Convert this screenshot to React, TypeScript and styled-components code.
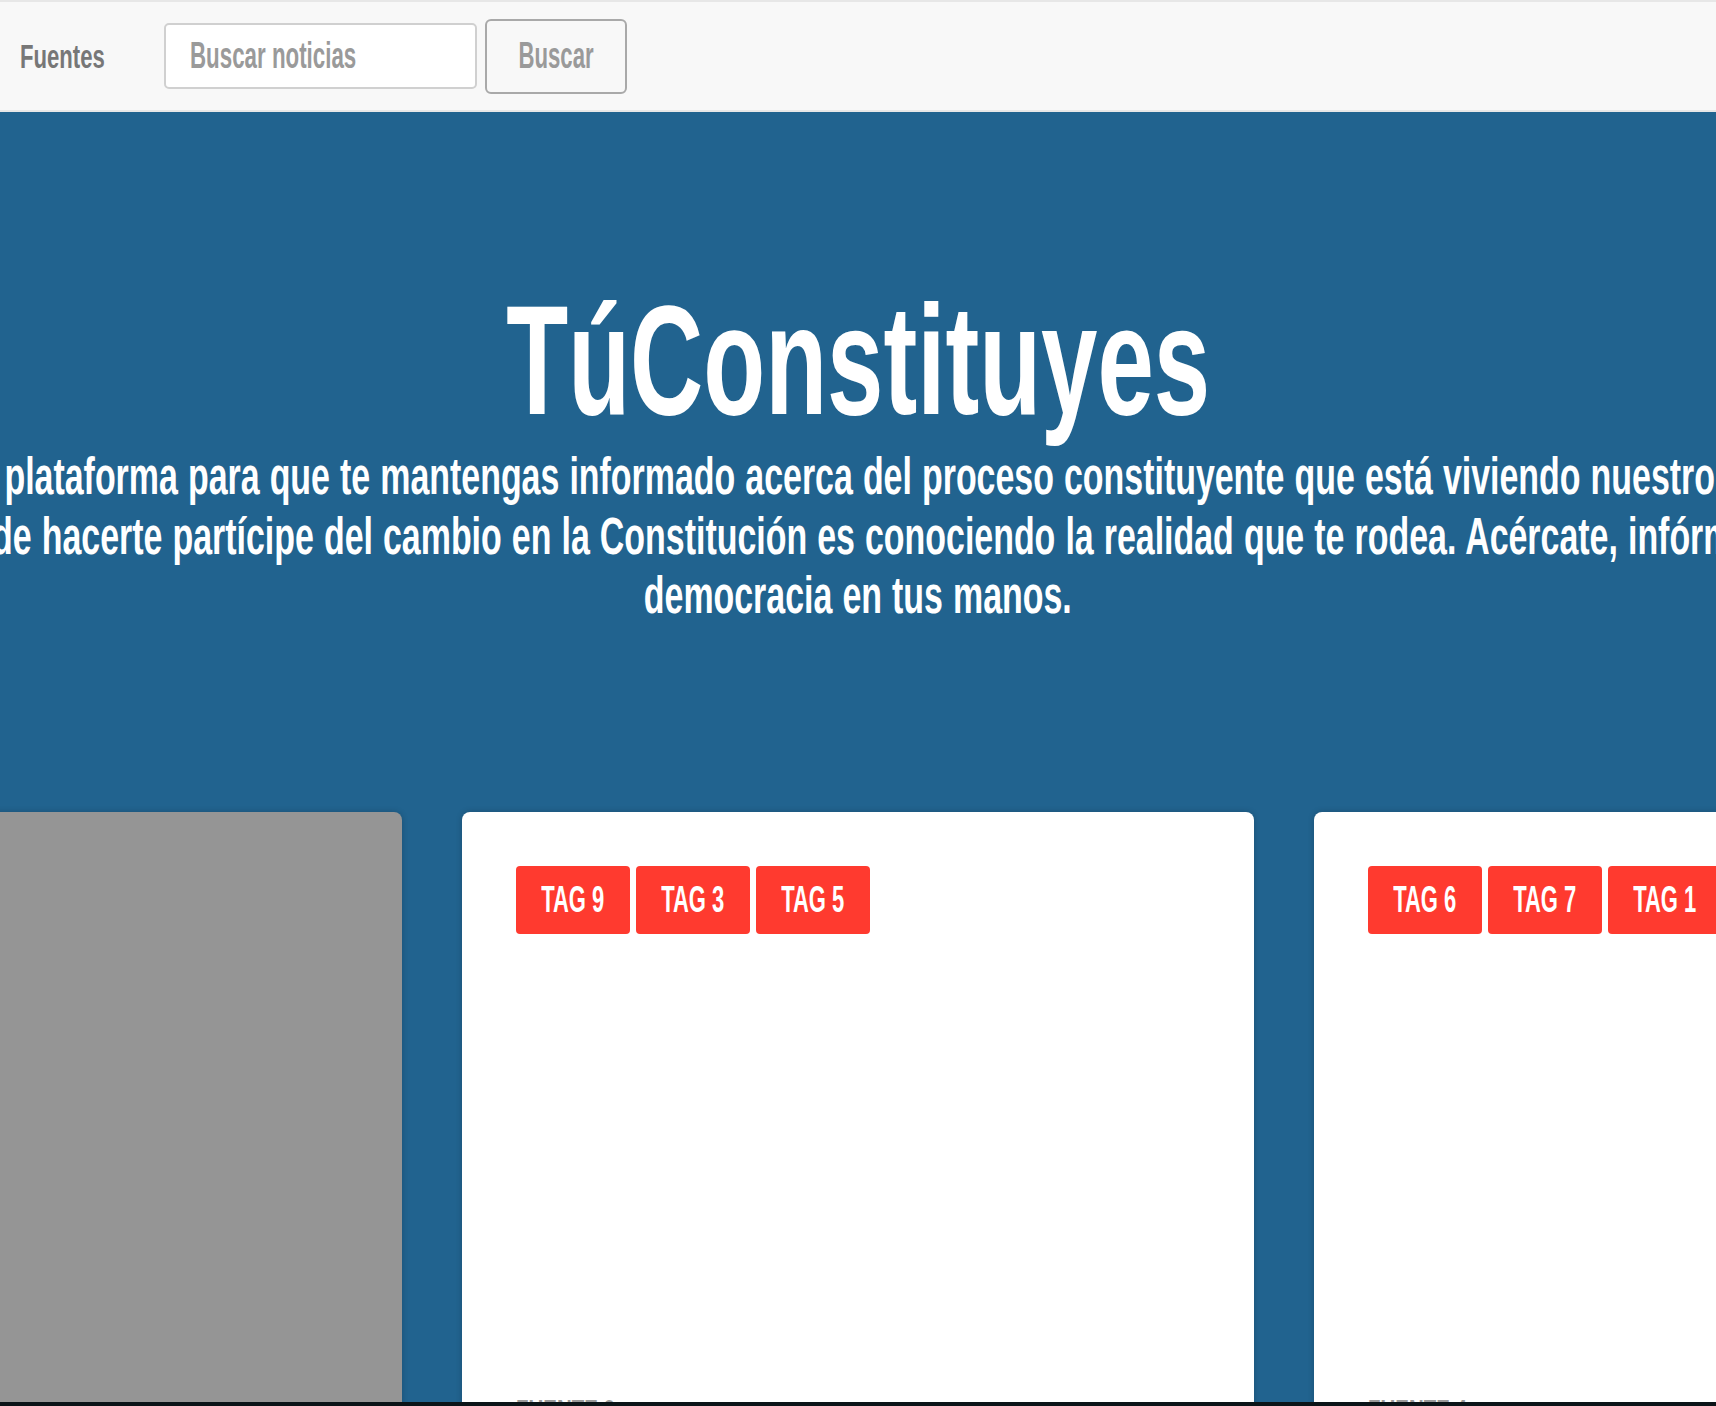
import React from "react";
import styled, { createGlobalStyle } from "styled-components";

const FONT = `"Liberation Sans", Arial, sans-serif`;

const GlobalStyle = createGlobalStyle`
  html, body {
    margin: 0;
    padding: 0;
    height: 100%;
    overflow: hidden;
  }
  body {
    font-family: ${FONT};
    font-weight: 700;
  }
  #root { height: 100%; }
`;

/* Arial Bold squeezed horizontally to stand in for a condensed display face */
const Squeeze = styled.span<{ $sx: number; $origin?: string }>`
  display: inline-block;
  white-space: nowrap;
  transform: scaleX(${(p) => p.$sx});
  transform-origin: ${(p) => p.$origin ?? "center"} center;
`;

const Page = styled.div`
  height: 100vh;
  display: flex;
  flex-direction: column;
`;

const Navbar = styled.nav`
  box-sizing: border-box;
  height: 112px;
  flex-shrink: 0;
  background: #f8f8f8;
  border-top: 2px solid #e7e7e7;
  border-bottom: 2px solid #e7e7e7;
  display: flex;
  align-items: center;
  padding-left: 20px;
`;

const Brand = styled.a`
  flex: none;
  width: 144px;
  font-size: 33px;
  line-height: 1;
  color: #777;
  text-decoration: none;
`;

const SearchField = styled.label`
  box-sizing: border-box;
  flex: none;
  width: 313px;
  height: 66px;
  border: 2px solid #d0d0d0;
  border-radius: 5px;
  background: #fff;
  padding-left: 24px;
  display: flex;
  align-items: center;
  overflow: hidden;
`;

const SearchInput = styled.input`
  flex: none;
  width: 460px;
  height: 100%;
  border: none;
  outline: none;
  background: transparent;
  padding: 0;
  font-family: ${FONT};
  font-weight: 700;
  font-size: 36px;
  color: #555;
  transform: scaleX(0.62);
  transform-origin: left center;
  &::placeholder { color: #9a9a9a; }
`;

const SearchButton = styled.button`
  box-sizing: border-box;
  flex: none;
  width: 142px;
  height: 75px;
  margin-left: 8px;
  padding: 0;
  border: 2px solid #a9a9a9;
  border-radius: 6px;
  background: transparent;
  display: flex;
  align-items: center;
  justify-content: center;
  font-family: ${FONT};
  font-weight: 700;
  font-size: 36px;
  color: #9a9a9a;
  overflow: hidden;
`;

const Hero = styled.main`
  flex: 1;
  min-height: 0;
  background: #21638f;
  overflow: hidden;
  display: flex;
  flex-direction: column;
  align-items: center;
  color: #fff;
`;

const Title = styled.h1`
  margin: 171px 0 0;
  font-size: 155px;
  line-height: 155px;
  font-weight: 700;
  white-space: nowrap;
`;

const Lead = styled.p`
  margin: 9px 0 0;
  display: flex;
  flex-direction: column;
  align-items: center;
  font-size: 51px;
  line-height: 59.5px;
  font-weight: 700;
  word-spacing: 1px;
`;

const Carousel = styled.div`
  margin-top: 186px;
  display: flex;
  gap: 60px;
`;

const Card = styled.article<{ $muted?: boolean }>`
  box-sizing: border-box;
  flex: 0 0 792px;
  height: 760px;
  border-radius: 8px;
  background: ${(p) => (p.$muted ? "#959595" : "#fff")};
  box-shadow: 0 0 6px rgba(0, 0, 0, 0.2);
  padding: 54px;
  display: flex;
  flex-direction: column;
`;

const Tags = styled.div`
  display: flex;
  gap: 6px;
`;

const Tag = styled.span`
  box-sizing: border-box;
  width: 114px;
  height: 68px;
  display: flex;
  align-items: center;
  justify-content: center;
  background: #ff3a2f;
  border-radius: 4px;
  color: #fff;
  font-size: 36px;
  line-height: 1;
  overflow: hidden;
`;

const Source = styled.div`
  margin-top: 461px;
  font-size: 33px;
  line-height: 1;
  color: #999;
  text-transform: uppercase;
`;

const BottomEdge = styled.div`
  height: 4px;
  flex-shrink: 0;
  background: #0b1418;
`;

const lead = [
  "Es la plataforma para que te mantengas informado acerca del proceso constituyente que está viviendo nuestro país.",
  "La única manera de hacerte partícipe del cambio en la Constitución es conociendo la realidad que te rodea. Acércate, infórmate y pon toda la",
  "democracia en tus manos.",
];

const cards = [
  { muted: true, tags: [] as string[], source: "" },
  { muted: false, tags: ["Tag 9", "Tag 3", "Tag 5"], source: "Fuente 3" },
  { muted: false, tags: ["Tag 6", "Tag 7", "Tag 1"], source: "Fuente 4" },
];

export default function App() {
  return (
    <Page>
      <GlobalStyle />
      <Navbar>
        <Brand href="#">
          <Squeeze $sx={0.67} $origin="left">Fuentes</Squeeze>
        </Brand>
        <SearchField>
          <SearchInput placeholder="Buscar noticias" />
        </SearchField>
        <SearchButton>
          <Squeeze $sx={0.615}>Buscar</Squeeze>
        </SearchButton>
      </Navbar>
      <Hero>
        <Title>
          <Squeeze $sx={0.654}>TúConstituyes</Squeeze>
        </Title>
        <Lead>
          {lead.map((line) => (
            <Squeeze key={line} $sx={0.665}>
              {line}
            </Squeeze>
          ))}
        </Lead>
        <Carousel>
          {cards.map((c, i) => (
            <Card key={i} $muted={c.muted}>
              {!c.muted && (
                <>
                  <Tags>
                    {c.tags.map((t) => (
                      <Tag key={t}>
                        <Squeeze $sx={0.61}>{t.toUpperCase()}</Squeeze>
                      </Tag>
                    ))}
                  </Tags>
                  <Source>
                    <Squeeze $sx={0.62} $origin="left">
                      {c.source}
                    </Squeeze>
                  </Source>
                </>
              )}
            </Card>
          ))}
        </Carousel>
      </Hero>
      <BottomEdge />
    </Page>
  );
}
